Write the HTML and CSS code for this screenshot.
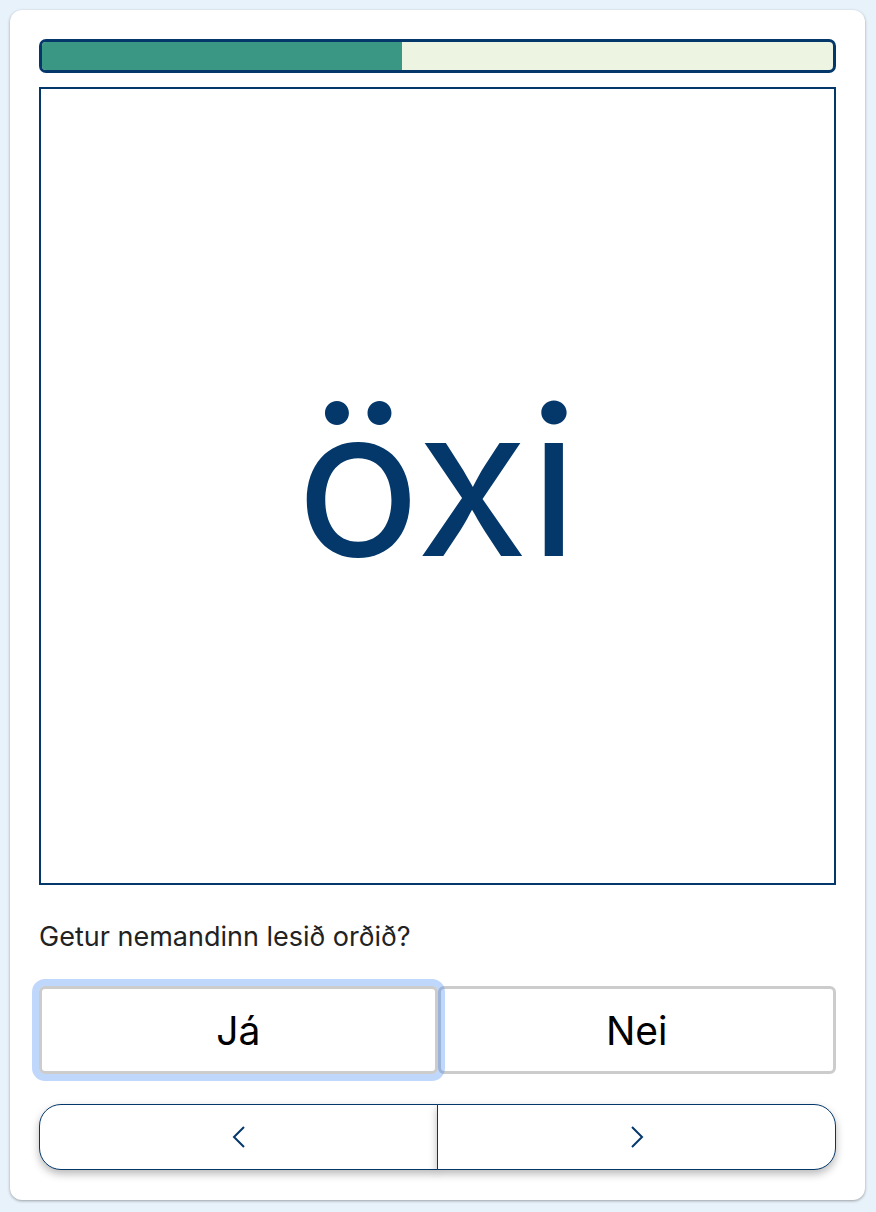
FILE: index.html
```html
<!DOCTYPE html>
<html lang="is">
<head>
<meta charset="utf-8">
<title>Lestrarpróf</title>
<link rel="stylesheet" href="styles.css">
</head>
<body>
<main class="card">
  <div class="progress"><div class="progress-fill" style="width: 45.45%"></div></div>
  <div class="word-box"><span class="word">öxi</span></div>
  <p class="question">Getur nemandinn lesið orðið?</p>
  <div class="answers">
    <button class="answer focused">Já</button>
    <button class="answer">Nei</button>
  </div>
  <div class="nav">
    <button class="nav-btn prev" aria-label="Fyrra">
      <svg width="16" height="24" viewBox="0 0 16 24"><path d="M13 2 L3 12 L13 22" fill="none" stroke="#04386b" stroke-width="2"/></svg>
    </button>
    <button class="nav-btn next" aria-label="Næsta">
      <svg width="16" height="24" viewBox="0 0 16 24"><path d="M3 2 L13 12 L3 22" fill="none" stroke="#04386b" stroke-width="2"/></svg>
    </button>
  </div>
</main>
</body>
</html>
```

FILE: styles.css
```css
* { box-sizing: border-box; }
html, body { margin: 0; padding: 0; }
body {
  background: #e8f2fa;
  font-family: Inter, "Liberation Sans", Arial, sans-serif;
  padding: 10px 11px 12px 10px;
}
.card {
  background: #ffffff;
  border-radius: 12px;
  box-shadow: 0 1px 3px rgba(0,0,0,0.35);
  padding: 29px 29px 30px 29px;
  display: flex;
  flex-direction: column;
}
.progress {
  height: 34px;
  border: 3px solid #04386b;
  border-radius: 7px;
  background: #edf4e2;
  overflow: hidden;
}
.progress-fill {
  height: 100%;
  background: #3a9784;
}
.word-box {
  margin-top: 14px;
  height: 798px;
  border: 2px solid #04386b;
  display: flex;
  align-items: center;
  justify-content: center;
  padding-bottom: 12px;
}
.word {
  color: #04386b;
  font-size: 207px;
  line-height: 1;
  font-weight: 400;
}
.question {
  margin: 36px 0 0 0;
  font-size: 27px;
  line-height: 32px;
  color: #222222;
}
.answers {
  margin-top: 33px;
  display: flex;
  height: 88px;
}
.answer {
  flex: 1;
  background: #ffffff;
  border: 3px solid #cccccc;
  border-radius: 6px;
  font-family: inherit;
  font-size: 39px;
  color: #000000;
  cursor: pointer;
  padding: 0;
}
.answer.focused {
  position: relative;
  z-index: 1;
  outline: 7px solid rgba(59,130,246,0.32);
  outline-offset: 0;
}
.nav {
  margin-top: 30px;
  display: flex;
  height: 66px;
}
.nav-btn {
  flex: 1;
  background: #ffffff;
  border: 1px solid #04386b;
  box-shadow: 0 4px 8px rgba(0,0,0,0.28);
  display: flex;
  align-items: center;
  justify-content: center;
  cursor: pointer;
  padding: 0;
}
.nav-btn.prev { border-radius: 22px 0 0 22px; }
.nav-btn.next { border-radius: 0 22px 22px 0; margin-left: -1px; }
```
